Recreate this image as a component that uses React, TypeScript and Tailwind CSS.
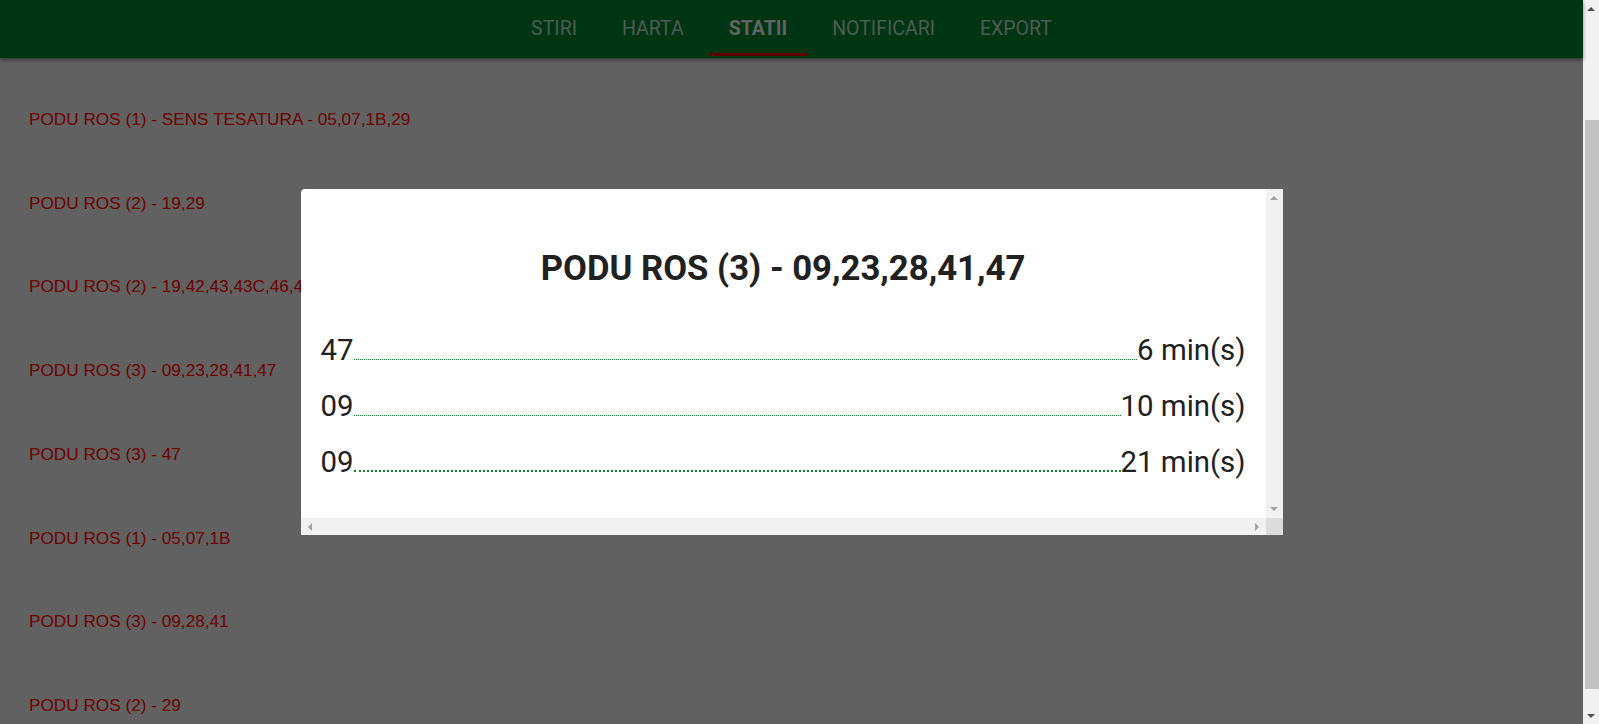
import React from 'react';

const tabs = [
  { name: 'STIRI', active: false },
  { name: 'HARTA', active: false },
  { name: 'STATII', active: true },
  { name: 'NOTIFICARI', active: false },
  { name: 'EXPORT', active: false },
];

const stations = [
  'PODU ROS (1) - SENS TESATURA - 05,07,1B,29',
  'PODU ROS (2) - 19,29',
  'PODU ROS (2) - 19,42,43,43C,46,47',
  'PODU ROS (3) - 09,23,28,41,47',
  'PODU ROS (3) - 47',
  'PODU ROS (1) - 05,07,1B',
  'PODU ROS (3) - 09,28,41',
  'PODU ROS (2) - 29',
];

const arrivals = [
  { line: '47', eta: '6 min(s)', thick: false },
  { line: '09', eta: '10 min(s)', thick: false },
  { line: '09', eta: '21 min(s)', thick: true },
];

// small triangle used by the fake scrollbars
function Arrow({ dir, color }: { dir: 'up' | 'down' | 'left' | 'right'; color: string }) {
  const pts = {
    up: '0,4 4,0 8,4',
    down: '0,0 8,0 4,4',
    left: '4,0 4,8 0,4',
    right: '0,0 0,8 4,4',
  }[dir];
  const vertical = dir === 'up' || dir === 'down';
  return (
    <svg width={vertical ? 8 : 4} height={vertical ? 4 : 8} viewBox={vertical ? '0 0 8 4' : '0 0 4 8'}>
      <polygon points={pts} fill={color} />
    </svg>
  );
}

function ArrivalsDialog() {
  return (
    <div className="absolute inset-0 flex items-center justify-center">
      <div className="flex h-[346px] w-[982px] flex-col overflow-hidden rounded-tl-[4px] bg-white font-['Roboto',sans-serif] text-[#212121]">
        <div className="flex min-h-0 flex-1">
          <div className="flex-1 px-5 pt-[59px]">
            <h2 className="text-center text-[34.7px] font-bold leading-[40px]">PODU ROS (3) - 09,23,28,41,47</h2>
            <div className="mt-[34px]">
              {arrivals.map((a, i) => (
                <div key={i} className="flex h-[56px] items-baseline text-[29.4px] leading-[56px]">
                  <span>{a.line}</span>
                  <span
                    className={`flex-1 border-dotted border-[#078c2d] ${a.thick ? 'border-b-2' : 'border-b'}`}
                  />
                  <span>{a.eta}</span>
                </div>
              ))}
            </div>
          </div>
          {/* vertical scrollbar */}
          <div className="flex w-[17px] flex-col items-center justify-between bg-[#f1f1f1] py-[7px]">
            <Arrow dir="up" color="#a3a3a3" />
            <Arrow dir="down" color="#a3a3a3" />
          </div>
        </div>
        {/* horizontal scrollbar */}
        <div className="flex h-[17px]">
          <div className="flex flex-1 items-center justify-between bg-[#f1f1f1] px-[7px]">
            <Arrow dir="left" color="#a3a3a3" />
            <Arrow dir="right" color="#a3a3a3" />
          </div>
          <div className="w-[17px] bg-[#dcdcdc]" />
        </div>
      </div>
    </div>
  );
}

export default function App() {
  return (
    <div className="flex h-screen w-full overflow-hidden bg-[#616161]">
      <div className="relative min-w-0 flex-1">
        <header className="flex h-[58px] justify-center gap-[5px] bg-[#003514] font-['Roboto',sans-serif] shadow-[0_2px_4px_rgba(0,0,0,0.45)]">
          {tabs.map((t) => (
            <div
              key={t.name}
              className={`flex h-[56px] items-center border-b-[3px] px-5 pt-[4px] text-[19.5px] ${
                t.active ? 'border-[#5e0000] font-bold text-[#646464]' : 'border-transparent text-[#4e5c53]'
              }`}
            >
              {t.name}
            </div>
          ))}
        </header>

        <ul className="pt-[20px] font-['Liberation_Sans',Arial,sans-serif] text-[17.2px] leading-[19.7px] text-[#6e0202]">
          {stations.map((s, i) => (
            <li key={i} className="py-8 pl-[29px]">
              {s}
            </li>
          ))}
        </ul>

        <ArrivalsDialog />
      </div>

      {/* page scrollbar */}
      <div className="flex w-[16px] flex-col bg-[#f1f1f1]">
        <div className="flex h-[17px] items-center justify-center pt-[1px]">
          <Arrow dir="up" color="#505050" />
        </div>
        <div className="mt-[103px] ml-[2px] h-[569px] bg-[#c1c1c1]" />
        <div className="mt-auto flex h-[17px] items-center justify-center">
          <Arrow dir="down" color="#505050" />
        </div>
      </div>
    </div>
  );
}
